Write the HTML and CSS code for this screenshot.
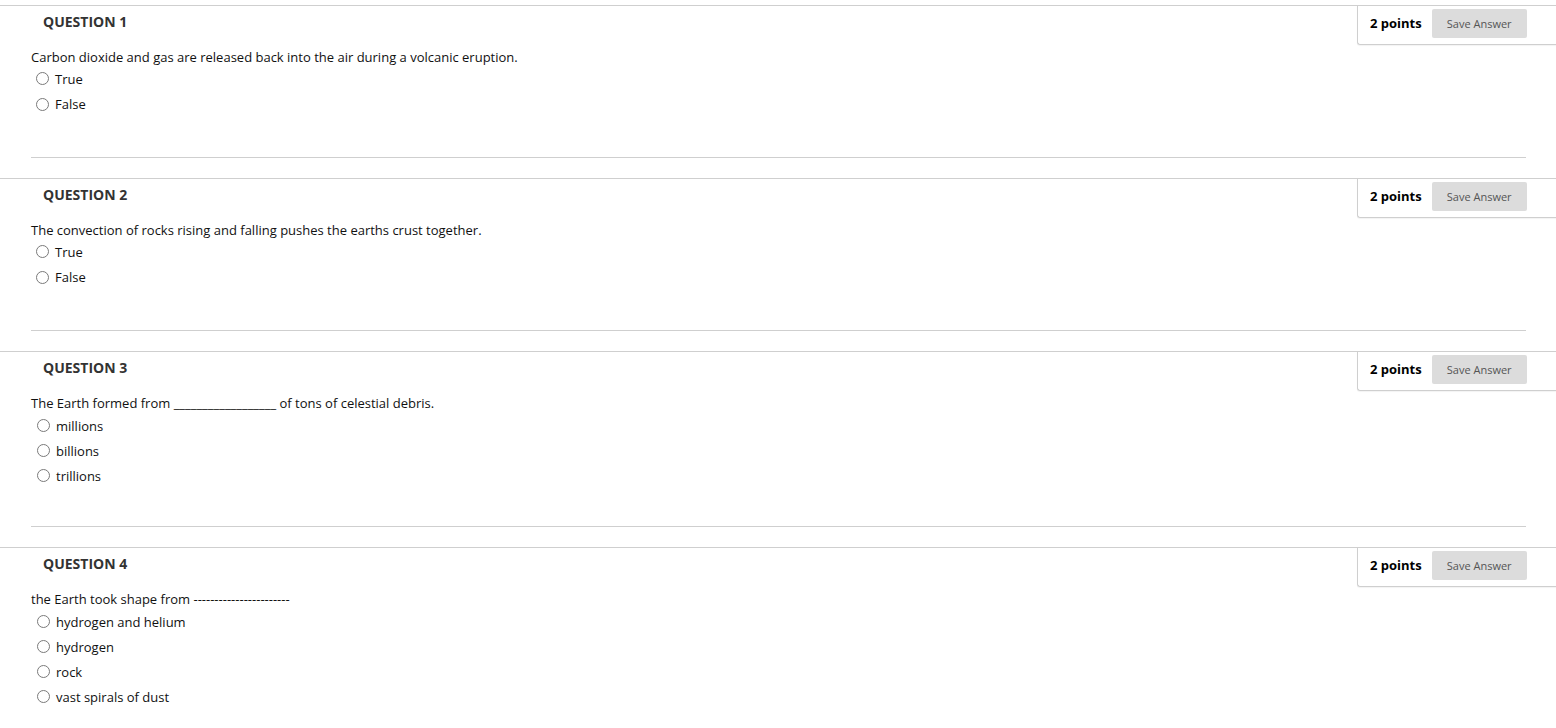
FILE: index.html
```html
<!DOCTYPE html>
<html>
<head>
<meta charset="utf-8">
<link rel="stylesheet" href="styles.css">
</head>
<body>
<div class="quiz">
  <section class="question q-two">
    <div class="q-head">
      <h3 class="q-title">QUESTION 1</h3>
      <div class="points-box"><span class="points">2 points</span><button class="save">Save Answer</button></div>
    </div>
    <div class="q-body">
      <p class="q-text">Carbon dioxide and gas are released back into the air during a volcanic eruption.</p>
      <ul class="options">
        <li><span class="radio"></span>True</li>
        <li><span class="radio"></span>False</li>
      </ul>
    </div>
    <hr class="divider">
  </section>
  <section class="question q-two">
    <div class="q-head">
      <h3 class="q-title">QUESTION 2</h3>
      <div class="points-box"><span class="points">2 points</span><button class="save">Save Answer</button></div>
    </div>
    <div class="q-body">
      <p class="q-text">The convection of rocks rising and falling pushes the earths crust together.</p>
      <ul class="options">
        <li><span class="radio"></span>True</li>
        <li><span class="radio"></span>False</li>
      </ul>
    </div>
    <hr class="divider">
  </section>
  <section class="question q-multi">
    <div class="q-head">
      <h3 class="q-title">QUESTION 3</h3>
      <div class="points-box"><span class="points">2 points</span><button class="save">Save Answer</button></div>
    </div>
    <div class="q-body">
      <p class="q-text">The Earth formed from __________________ of tons of celestial debris.</p>
      <ul class="options">
        <li><span class="radio"></span>millions</li>
        <li><span class="radio"></span>billions</li>
        <li><span class="radio"></span>trillions</li>
      </ul>
    </div>
    <hr class="divider">
  </section>
  <section class="question q-multi">
    <div class="q-head">
      <h3 class="q-title">QUESTION 4</h3>
      <div class="points-box"><span class="points">2 points</span><button class="save">Save Answer</button></div>
    </div>
    <div class="q-body">
      <p class="q-text">the Earth took shape from -----------------------</p>
      <ul class="options">
        <li><span class="radio"></span>hydrogen and helium</li>
        <li><span class="radio"></span>hydrogen</li>
        <li><span class="radio"></span>rock</li>
        <li><span class="radio"></span>vast spirals of dust</li>
      </ul>
    </div>
  </section>
</div>
</body>
</html>
```

FILE: styles.css
```css
html, body {
  margin: 0;
  padding: 0;
  background: #fff;
}
body {
  font-family: "Open Sans", "Liberation Sans", sans-serif;
  color: #111;
  font-size: 13px;
}
.quiz {
  padding-top: 5px;
}
.question {
  border-top: 1px solid #cfcfcf;
  margin-bottom: 20px;
}
.q-head {
  display: flex;
  justify-content: space-between;
  align-items: flex-start;
  height: 39px;
}
.q-title {
  margin: 0;
  padding: 6px 0 0 43px;
  font-size: 14px;
  font-weight: 700;
  line-height: 19px;
  color: #333;
}
.points-box {
  display: flex;
  align-items: center;
  width: 199px;
  padding: 3px 30px 6px 12px;
  box-sizing: border-box;
  border-left: 1px solid #cfcfcf;
  border-bottom: 1px solid #cfcfcf;
  border-bottom-left-radius: 3px;
  box-shadow: 0 1px 1px rgba(0,0,0,0.05);
}
.points {
  font-weight: 700;
  font-size: 13px;
  color: #000;
  margin-right: 10px;
  white-space: nowrap;
  margin-top: -1px;
}
.save {
  flex: none;
  width: 95px;
  height: 29px;
  border: 0;
  border-radius: 2px;
  background: #dcdcdc;
  color: #555;
  font-family: "Open Sans", "Liberation Sans", sans-serif;
  font-size: 11px;
  padding: 0;
}
.q-body {
  padding-left: 31px;
}
.q-text {
  margin: 3px 0 0;
  line-height: 18px;
}
.options {
  list-style: none;
  margin: 0;
  padding: 0 0 0 5px;
}
.options li {
  display: flex;
  align-items: center;
  height: 25px;
}
.q-two .options li + li {
  height: 26px;
}
.q-multi .options {
  margin-top: 1px;
}
.q-multi .options li {
  padding-left: 1px;
}
.radio {
  width: 11px;
  height: 11px;
  border: 1px solid #7a7a7a;
  border-radius: 50%;
  margin-right: 6px;
  flex: none;
}
.divider {
  border: 0;
  border-top: 1px solid #cfcfcf;
  margin: 38px 30px 0 31px;
}
.q-two .divider {
  margin-top: 40px;
}
```
